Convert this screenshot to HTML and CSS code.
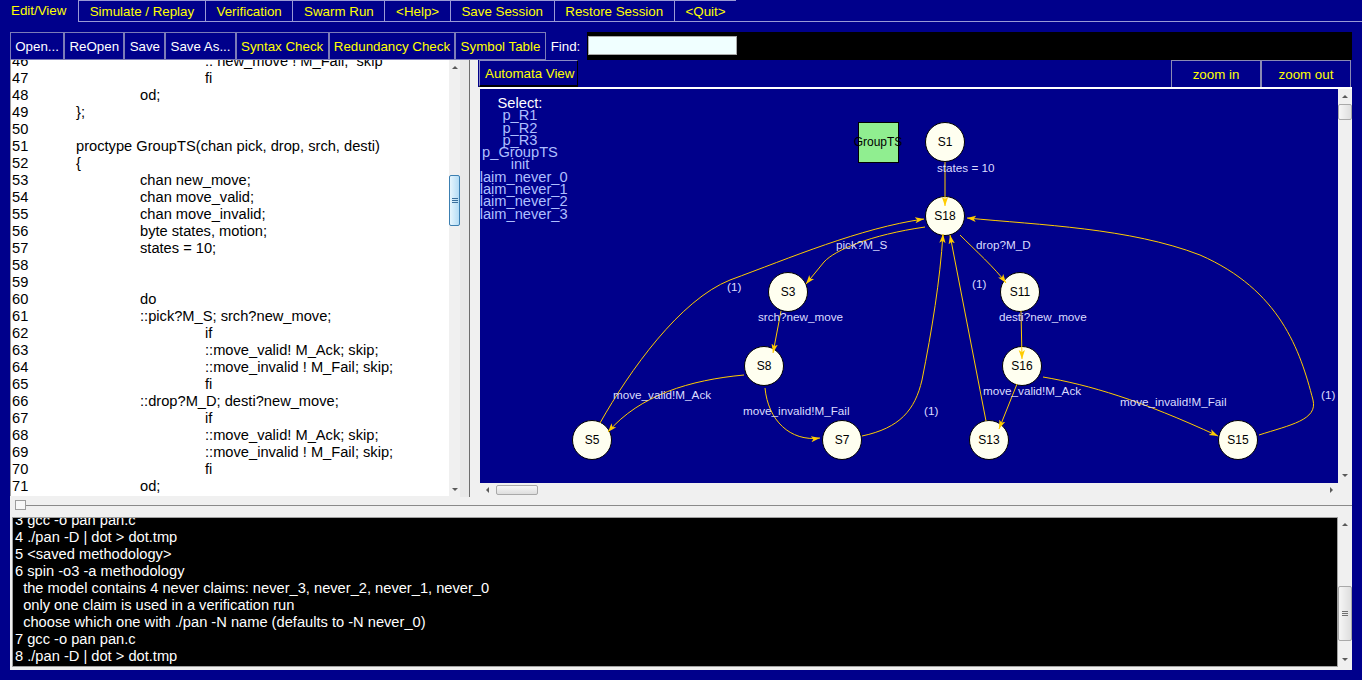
FILE: index.html
```html
<!DOCTYPE html>
<html>
<head>
<meta charset="utf-8">
<title>iSpin</title>
<link rel="stylesheet" href="styles.css">
</head>
<body>
<div class="menubar">
  <div class="tab active">Edit/View</div>
  <div class="tab">Simulate / Replay</div>
  <div class="tab">Verification</div>
  <div class="tab">Swarm Run</div>
  <div class="tab">&lt;Help&gt;</div>
  <div class="tab">Save Session</div>
  <div class="tab">Restore Session</div>
  <div class="tab">&lt;Quit&gt;</div>
  <div class="menufill"></div>
</div>

<div class="toolbar">
  <div class="tbtn">Open...</div>
  <div class="tbtn">ReOpen</div>
  <div class="tbtn">Save</div>
  <div class="tbtn">Save As...</div>
  <div class="tbtn y">Syntax Check</div>
  <div class="tbtn y">Redundancy Check</div>
  <div class="tbtn y">Symbol Table</div>
  <div class="findlabel">Find:</div>
  <div class="findinput"></div>
</div>

<div class="work">
  <div class="panes">
    <div class="editor-pane">
      <div class="editor">
        <div class="code">
          <div class="line"><span class="ln">46</span><span class="i3">:: new_move ! M_Fail;  skip</span></div>
          <div class="line"><span class="ln">47</span><span class="i3">fi</span></div>
          <div class="line"><span class="ln">48</span><span class="i2">od;</span></div>
          <div class="line"><span class="ln">49</span><span>};</span></div>
          <div class="line"><span class="ln">50</span></div>
          <div class="line"><span class="ln">51</span><span>proctype GroupTS(chan pick, drop, srch, desti)</span></div>
          <div class="line"><span class="ln">52</span><span>{</span></div>
          <div class="line"><span class="ln">53</span><span class="i2">chan new_move;</span></div>
          <div class="line"><span class="ln">54</span><span class="i2">chan move_valid;</span></div>
          <div class="line"><span class="ln">55</span><span class="i2">chan move_invalid;</span></div>
          <div class="line"><span class="ln">56</span><span class="i2">byte states, motion;</span></div>
          <div class="line"><span class="ln">57</span><span class="i2">states = 10;</span></div>
          <div class="line"><span class="ln">58</span></div>
          <div class="line"><span class="ln">59</span></div>
          <div class="line"><span class="ln">60</span><span class="i2">do</span></div>
          <div class="line"><span class="ln">61</span><span class="i2">::pick?M_S; srch?new_move;</span></div>
          <div class="line"><span class="ln">62</span><span class="i3">if</span></div>
          <div class="line"><span class="ln">63</span><span class="i3">::move_valid! M_Ack; skip;</span></div>
          <div class="line"><span class="ln">64</span><span class="i3">::move_invalid ! M_Fail; skip;</span></div>
          <div class="line"><span class="ln">65</span><span class="i3">fi</span></div>
          <div class="line"><span class="ln">66</span><span class="i2">::drop?M_D; desti?new_move;</span></div>
          <div class="line"><span class="ln">67</span><span class="i3">if</span></div>
          <div class="line"><span class="ln">68</span><span class="i3">::move_valid! M_Ack; skip;</span></div>
          <div class="line"><span class="ln">69</span><span class="i3">::move_invalid ! M_Fail; skip;</span></div>
          <div class="line"><span class="ln">70</span><span class="i3">fi</span></div>
          <div class="line"><span class="ln">71</span><span class="i2">od;</span></div>
          <div class="line"><span class="ln">72</span></div>
        </div>
      </div>
      <div class="vscroll edscroll">
        <div class="sbtn"><span class="arr-up"></span></div>
        <div class="track">
          <div class="gap-ed"></div>
          <div class="thumb blue thumb-ed"><div class="grip blue-grip"></div></div>
        </div>
        <div class="sbtn"><span class="arr-down"></span></div>
      </div>
    </div>

    <div class="divider"><div class="divider-strip"></div></div>

    <div class="auto-pane">
      <div class="auto-header">
        <div class="abtn">Automata View</div>
        <div class="hspacer"></div>
        <div class="zbtn">zoom in</div>
        <div class="zbtn">zoom out</div>
      </div>
      <div class="auto-body">
        <div class="canvas-row">
          <div class="canvas">
            <div class="selectlist">
              <div class="sel-title">Select:</div>
              <div>p_R1</div>
              <div>p_R2</div>
              <div>p_R3</div>
              <div>p_GroupTS</div>
              <div>init</div>
              <div>claim_never_0</div>
              <div>claim_never_1</div>
              <div>claim_never_2</div>
              <div>claim_never_3</div>
            </div>
            <svg class="graph" width="858" height="394" viewBox="480 89 858 394">
              <defs>
                <marker id="ah" viewBox="0 0 10 10" refX="10" refY="5" markerWidth="9" markerHeight="9" markerUnits="userSpaceOnUse" orient="auto">
                  <path d="M0 1.5 L10 5 L0 8.5 L2.5 5 z" fill="#ffcc00"/>
                </marker>
              </defs>
              <rect x="858.5" y="122.5" width="40" height="40" fill="#90ee90" stroke="#000"/>
              <text class="nlabel" x="878" y="146" text-anchor="middle">GroupTS</text>
              <g class="nodes">
                <circle cx="945" cy="142" r="19.5"/>
                <circle cx="945" cy="216" r="19.5"/>
                <circle cx="788" cy="292" r="19.5"/>
                <circle cx="1020" cy="292" r="19.5"/>
                <circle cx="764" cy="366" r="19.5"/>
                <circle cx="1022" cy="366" r="19.5"/>
                <circle cx="592" cy="440" r="19.5"/>
                <circle cx="842" cy="440" r="19.5"/>
                <circle cx="989" cy="440" r="19.5"/>
                <circle cx="1238" cy="440" r="19.5"/>
              </g>
              <g class="edges">
                <path d="M945 162 L945 206"/>
                <path d="M600 423 C630 370, 680 300, 730 280 C790 258, 860 228, 924 219"/>
                <path d="M925 227 C870 235, 835 250, 824 262 L806 284"/>
                <path d="M960 235 C975 250, 995 268, 1006 283"/>
                <path d="M781 311 L773 353"/>
                <path d="M1021 311 L1022 359"/>
                <path d="M744 375 C690 380, 640 395, 608 432"/>
                <path d="M765 388 C768 420, 790 442, 820 438"/>
                <path d="M862 436 C900 428, 915 410, 922 380 C932 330, 940 280, 943 234"/>
                <path d="M986 421 L950 235"/>
                <path d="M1017 384 L999 429"/>
                <path d="M1043 377 C1090 385, 1140 400, 1218 436"/>
                <path d="M1259 435 C1290 425, 1318 420, 1313 400 C1300 350, 1280 290, 1200 255 C1130 228, 1040 225, 967 218"/>
              </g>
              <g class="nlabels">
                <text x="945" y="146">S1</text>
                <text x="945" y="220">S18</text>
                <text x="788" y="296">S3</text>
                <text x="1020" y="296">S11</text>
                <text x="764" y="370">S8</text>
                <text x="1022" y="370">S16</text>
                <text x="592" y="444">S5</text>
                <text x="842" y="444">S7</text>
                <text x="989" y="444">S13</text>
                <text x="1238" y="444">S15</text>
              </g>
              <g class="elabels">
                <text x="937" y="172">states = 10</text>
                <text x="836" y="249">pick?M_S</text>
                <text x="976" y="249">drop?M_D</text>
                <text x="727" y="291">(1)</text>
                <text x="972" y="288">(1)</text>
                <text x="758" y="321">srch?new_move</text>
                <text x="999" y="321">desti?new_move</text>
                <text x="613" y="399">move_valid!M_Ack</text>
                <text x="743" y="415">move_invalid!M_Fail</text>
                <text x="924" y="415">(1)</text>
                <text x="983" y="395">move_valid!M_Ack</text>
                <text x="1120" y="406">move_invalid!M_Fail</text>
                <text x="1321" y="399">(1)</text>
              </g>
            </svg>
          </div>
          <div class="vscroll cvscroll">
            <div class="sbtn"><span class="arr-up"></span></div>
            <div class="track">
              <div class="thumb grey thumb-cv"></div>
            </div>
            <div class="sbtn"><span class="arr-down"></span></div>
          </div>
        </div>
        <div class="hscroll">
          <div class="hbtn"><span class="arr-left"></span></div>
          <div class="htrack">
            <div class="hthumb"></div>
          </div>
          <div class="hbtn"><span class="arr-right"></span></div>
          <div class="corner"></div>
        </div>
      </div>
    </div>
  </div>

  <div class="sash">
    <div class="sash-grip"></div>
    <div class="sash-line"></div>
  </div>

  <div class="console-row">
    <div class="console">
      <div class="console-text">
        <div class="cl">3 gcc -o pan pan.c</div>
        <div class="cl">4 ./pan -D | dot &gt; dot.tmp</div>
        <div class="cl">5 &lt;saved methodology&gt;</div>
        <div class="cl">6 spin -o3 -a methodology</div>
        <div class="cl">  the model contains 4 never claims: never_3, never_2, never_1, never_0</div>
        <div class="cl">  only one claim is used in a verification run</div>
        <div class="cl">  choose which one with ./pan -N name (defaults to -N never_0)</div>
        <div class="cl">7 gcc -o pan pan.c</div>
        <div class="cl">8 ./pan -D | dot &gt; dot.tmp</div>
      </div>
    </div>
    <div class="vscroll coscroll">
      <div class="sbtn"><span class="arr-up"></span></div>
      <div class="track">
        <div class="gap-co"></div>
        <div class="thumb grey thumb-co"><div class="grip grey-grip"></div></div>
      </div>
      <div class="sbtn"><span class="arr-down"></span></div>
    </div>
  </div>
</div>
</body>
</html>
```
FILE: styles.css
```css
* { box-sizing: border-box; }
html, body { margin: 0; padding: 0; }
body {
  width: 1362px;
  height: 680px;
  overflow: hidden;
  background: #00008b;
  font-family: "Liberation Sans", Arial, sans-serif;
  font-size: 13.33px;
}

/* ---------- menu tabs ---------- */
.menubar { display: flex; height: 22px; }
.tab {
  height: 22px;
  display: flex;
  align-items: center;
  padding: 1px 10.7px 0;
  color: #ffff00;
  border-left: 1px solid #9a9ad6;
  border-top: 1px solid #9a9ad6;
  border-bottom: 1px solid #9a9ad6;
  white-space: nowrap;
}
.tab.active { border: none; width: 78px; padding: 0 0 2px 11px; }
.menufill { flex: 1; border-bottom: 1px solid #9a9ad6; }

/* ---------- toolbar ---------- */
.toolbar {
  display: flex;
  height: 28px;
  margin: 10px 10px 0;
  background: #000;
}
.tbtn {
  display: flex;
  align-items: center;
  padding: 0 4.25px;
  border: 1px solid #7c7cb8;
  background: #00008b;
  color: #fff;
  white-space: nowrap;
}
.tbtn.y { color: #ffff00; }
.findlabel {
  display: flex;
  align-items: center;
  width: 41px;
  padding-left: 5px;
  background: #00008b;
  color: #fff;
}
.findinput {
  width: 149px;
  height: 19px;
  margin-top: 4px;
  margin-left: 1px;
  background: #f0ffff;
  border: 1px solid #a8a8a8;
}

/* ---------- work area ---------- */
.work {
  margin: 0 10px;
  height: 610px;
  background: #f0f0f0;
  display: flex;
  flex-direction: column;
}
.panes { display: flex; height: 437px; }

.editor-pane { width: 450px; display: flex; }
.editor {
  flex: 1;
  background: #fff;
  border-left: 1px solid #a0a0a0;
  overflow: hidden;
  margin-bottom: 1px;
}
.code { margin-top: -7px; padding-left: 1px; }
.line {
  display: flex;
  height: 17px;
  line-height: 17px;
  font-size: 14.67px;
  color: #000;
  white-space: pre;
}
.ln { width: 64px; flex: none; }
.i2 { padding-left: 64px; }
.i3 { padding-left: 129px; }

/* scrollbars */
.vscroll {
  display: flex;
  flex-direction: column;
  background: #f0f0f0;
}
.edscroll { width: 11px; }
.cvscroll { width: 14px; }
.coscroll { width: 14px; }
.sbtn {
  height: 15px;
  display: flex;
  align-items: center;
  justify-content: center;
  flex: none;
}
.track { flex: 1; display: flex; flex-direction: column; align-items: stretch; }
.thumb {
  display: flex;
  align-items: center;
  justify-content: center;
  border-radius: 2px;
}
.thumb.blue {
  background: linear-gradient(to right, #e6f5fd, #b4dcf5);
  border: 1px solid #3c7fb1;
}
.thumb.grey {
  background: linear-gradient(to right, #f6f6f6, #dedede);
  border: 1px solid #a9a9a9;
}
.gap-ed { height: 100px; flex: none; }
.thumb-ed { height: 51px; }
.thumb-cv { height: 16px; margin-top: 0; }
.gap-co { height: 54px; flex: none; }
.thumb-co { height: 55px; }
.grip { width: 6px; height: 5px; }
.blue-grip { background: repeating-linear-gradient(to bottom, #3a6f9c 0 1px, transparent 1px 2px); }
.grey-grip { background: repeating-linear-gradient(to bottom, #707070 0 1px, transparent 1px 2px); }

.arr-up, .arr-down, .arr-left, .arr-right { width: 0; height: 0; display: block; }
.arr-up { border-left: 3px solid transparent; border-right: 3px solid transparent; border-bottom: 3px solid #5a5a5a; }
.arr-down { border-left: 3px solid transparent; border-right: 3px solid transparent; border-top: 3px solid #5a5a5a; }
.arr-left { border-top: 3px solid transparent; border-bottom: 3px solid transparent; border-right: 3px solid #5a5a5a; }
.arr-right { border-top: 3px solid transparent; border-bottom: 3px solid transparent; border-left: 3px solid #5a5a5a; }

.divider { width: 18px; display: flex; }
.divider-strip { width: 10px; background: #e9e9e9; border-right: 1px solid #6e6e6e; }

/* ---------- automata pane ---------- */
.auto-pane { flex: 1; display: flex; flex-direction: column; }
.auto-header {
  height: 27px;
  display: flex;
  background: #00008b;
  flex: none;
}
.abtn {
  width: 99px;
  height: 27px;
  margin-left: 1px;
  padding: 1px 0 0 5px;
  display: flex;
  align-items: center;
  color: #ffff00;
  border-top: 1px solid #8a8ac4;
  border-left: 1px solid #8a8ac4;
  border-right: 1px solid #000;
  border-bottom: 2px solid #000;
}
.hspacer { flex: 1; }
.zbtn {
  width: 90px;
  display: flex;
  align-items: center;
  justify-content: center;
  color: #ffff00;
  border: 1px solid #8a8ab4;
  border-bottom: none;
}
.zbtn:last-child { margin-right: 1px; }

.auto-body { flex: 1; display: flex; flex-direction: column; padding-left: 2px; }
.canvas-row { flex: 1; display: flex; border-top: 2px solid #fff; }
.canvas {
  flex: 1;
  position: relative;
  overflow: hidden;
  background: #00008b;
}
.graph { display: block; position: absolute; left: 0; top: 0; }
.nodes circle { fill: #fffff0; stroke: #000; stroke-width: 1; }
.edges path { fill: none; stroke: #ffcc00; stroke-width: 1; marker-end: url(#ah); }
.nlabels text, .nlabel {
  font-family: "Liberation Sans", Arial, sans-serif;
  font-size: 12px;
  fill: #000;
  text-anchor: middle;
}
.elabels text {
  font-family: "Liberation Sans", Arial, sans-serif;
  font-size: 11.7px;
  fill: #dcdcff;
}
.selectlist {
  position: absolute;
  left: -41px;
  top: 8px;
  width: 162px;
  text-align: center;
  font-size: 14.67px;
  line-height: 12.3px;
  color: #aebfff;
}
.sel-title { color: #fff; }

.hscroll { height: 14px; display: flex; background: #f0f0f0; flex: none; }
.hbtn { width: 14px; display: flex; align-items: center; justify-content: center; }
.htrack { flex: 1; padding: 2px 0 2px 2px; display: flex; }
.hthumb {
  width: 42px;
  background: linear-gradient(to bottom, #f6f6f6, #dedede);
  border: 1px solid #a9a9a9;
  border-radius: 2px;
}
.corner { width: 14px; }

/* ---------- sash ---------- */
.sash { height: 13px; display: flex; align-items: flex-start; padding: 3px 0 0 5px; flex: none; }
.sash-grip { width: 11px; height: 10px; background: #f8f8f8; border: 1px solid #9c9c9c; }
.sash-line { flex: 1; height: 1px; margin-top: 5px; background: #8a8a8a; }

/* ---------- console ---------- */
.console-row { height: 160px; display: flex; padding: 7px 0 3px 2px; flex: none; }
.console {
  flex: 1;
  background: #000;
  border: 1px solid #a0a0a0;
  overflow: hidden;
}
.console-text {
  margin-top: -6px;
  padding-left: 2px;
  color: #fff;
  font-size: 14.67px;
  line-height: 17px;
}
.cl { height: 17px; white-space: pre; }
```
